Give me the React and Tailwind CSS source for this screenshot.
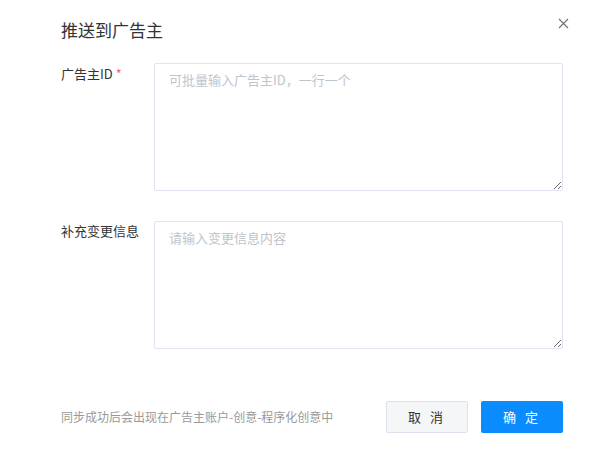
import React from "react";

export default function App() {
  const font = { fontFamily: '"Noto Sans CJK SC", "Noto Sans", sans-serif' };
  return (
    <div className="w-[594px] h-[451px] bg-white relative overflow-hidden" style={font}>
      <button className="absolute left-[557px] top-[17px] w-[12px] h-[12px] flex items-center justify-center text-[#666]">
        <svg width="11" height="11" viewBox="0 0 11 11" fill="none" stroke="#6b6f78" strokeWidth="1.1">
          <path d="M1 1L10 10M10 1L1 10" />
        </svg>
      </button>
      <div className="pl-[61px] pr-[31px] pt-[18px] flex flex-col">
        <div className="text-[17px] leading-[24px] text-[#333]">推送到广告主</div>
        <div className="flex mt-[21px]">
          <div className="w-[93px] text-[13px] leading-[20px] text-[#333] pt-[1px]">
            广告主ID<span className="text-[#f56c6c] ml-[3px]">*</span>
          </div>
          <textarea
            className="w-[409px] h-[128px] border border-[#dfe4f0] rounded-[2px] px-[14px] py-[6px] text-[13px] leading-[20px] text-[#333] placeholder:text-[#c0c4cc] outline-none"
            placeholder="可批量输入广告主ID，一行一个"
          />
        </div>
        <div className="flex mt-[30px]">
          <div className="w-[93px] text-[13px] leading-[20px] text-[#333] pt-[0px]">补充变更信息</div>
          <textarea
            className="w-[409px] h-[128px] border border-[#dfe4f0] rounded-[2px] px-[14px] py-[6px] text-[13px] leading-[20px] text-[#333] placeholder:text-[#c0c4cc] outline-none"
            placeholder="请输入变更信息内容"
          />
        </div>
        <div className="flex items-center mt-[52px]">
          <div className="flex-1 text-[12px] text-[#999]">同步成功后会出现在广告主账户-创意-程序化创意中</div>
          <button className="w-[82px] h-[32px] bg-[#f5f6f8] border border-[#dde2ee] rounded-[2px] text-[13px] text-[#333] tracking-[3px]">
            取 消
          </button>
          <button className="w-[82px] h-[32px] ml-[13px] bg-[#0a8cff] rounded-[2px] text-[13px] text-white tracking-[3px]">
            确 定
          </button>
        </div>
      </div>
    </div>
  );
}
